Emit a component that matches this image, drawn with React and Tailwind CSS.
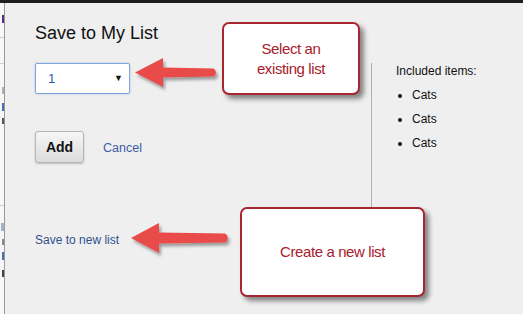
import React from 'react';

const Callout = ({ className, children }) => (
    <div
        className={`absolute bg-white border-2 border-[#a82630] rounded-[7px] shadow-[4px_4px_5px_rgba(0,0,0,0.45)] flex items-center justify-center text-center text-[15px] leading-[20px] tracking-[-0.4px] text-[#a8202c] ${className}`}
    >
        {children}
    </div>
);

// red pointer arrow, tip on the left
const Arrow = ({ className, w, h, head, shaft }) => (
    <svg className={`absolute ${className}`} width={w + 6} height={h + 6} style={{ overflow: 'visible' }}>
        <defs>
            <filter id="arrowShadow" x="-20%" y="-40%" width="140%" height="180%">
                <feDropShadow dx="2" dy="3" stdDeviation="1.5" floodColor="#000" floodOpacity="0.35" />
            </filter>
        </defs>
        <g filter="url(#arrowShadow)">
            <path
                d={`M0 ${h / 2} L${head} 0 L${head} ${h / 2 - shaft / 2 - 0.5} L${w - shaft / 2} ${h / 2 - shaft / 2 + 0.5} A${shaft / 2} ${shaft / 2} 0 0 1 ${w - shaft / 2} ${h / 2 + shaft / 2 - 0.5} L${head} ${h / 2 + shaft / 2 + 0.5} L${head} ${h} Z`}
                fill="#e84b48"
            />
        </g>
    </svg>
);

const App = () => {
    return (
        <div className="w-[523px] h-[314px] overflow-hidden flex flex-col bg-[#efefef] font-['Liberation_Sans',Arial,sans-serif]">
            {/* top edge of the window behind */}
            <div className="h-[3px] bg-[#1e1e1e] shrink-0" />

            <div className="flex flex-1 min-h-0">
                {/* sliver of the page behind the dialog (only glyph edges show) */}
                <div className="w-[4px] shrink-0 bg-[#f7f7f7] flex flex-col items-end">
                    <div className="mt-[12px] w-[2px] h-[8px] bg-[#5b2a86]" />
                    <div className="mt-[14px] w-full h-px bg-[#cfcfcf]" />
                    <div className="mt-[25px] w-full h-px bg-[#cfcfcf]" />
                    <div className="mt-[23px] w-[2px] h-[7px] bg-[#b0b0b0]" />
                    <div className="mt-[9px] w-[2px] h-[8px] bg-[#4a6cb0]" />
                    <div className="mt-[7px] w-[2px] h-[6px] bg-[#555]" />
                    <div className="mt-[81px] w-full h-px bg-[#cfcfcf]" />
                    <div className="mt-[17px] w-[3px] h-[8px] bg-[#9fb2c8]" />
                    <div className="mt-[8px] w-[2px] h-[6px] bg-[#888]" />
                    <div className="mt-[7px] w-[2px] h-[8px] bg-[#4a6cb0]" />
                    <div className="mt-[10px] w-[2px] h-[7px] bg-[#444]" />
                </div>
                <div className="w-px shrink-0 bg-[#9a9a9a]" />

                {/* dialog */}
                <div className="relative flex-1 flex">
                    <div className="w-[366px] shrink-0 pl-[30px] pt-[19px]">
                        <h2 className="text-[18px] leading-[22px] text-[#111]">Save to My List</h2>

                        <div className="mt-[19px] w-[95px] h-[31px] bg-white border border-[#7ea6dc] rounded-[2px] shadow-[0_0_2px_rgba(90,140,210,0.5)] flex items-center justify-between pl-[12px] pr-[6px]">
                            <span className="text-[13px] text-[#2a5ba8]">1</span>
                            <span className="text-[9px] text-[#111]">▼</span>
                        </div>

                        <div className="mt-[37px] flex items-center">
                            <button className="w-[49px] h-[32px] rounded-[3px] border border-[#b4b4b4] bg-gradient-to-b from-[#f6f6f6] to-[#dcdcdc] shadow-[0_1px_2px_rgba(0,0,0,0.2)] text-[14px] font-bold text-[#111]">
                                Add
                            </button>
                            <span className="ml-[19px] mt-[3px] text-[12.5px] text-[#3b5ea6]">Cancel</span>
                        </div>

                        <div className="mt-[68px] text-[12px] text-[#2f4f8f]">Save to new list</div>
                    </div>

                    <div className="mt-[60px] h-[145px] border-l border-[#b0b0b0] pl-[24px] pt-[1px] text-[12px] text-[#111]">
                        <div className="leading-[15px]">Included items:</div>
                        <ul className="mt-[9px] flex flex-col gap-[9px]">
                            {['Cats', 'Cats', 'Cats'].map((item, i) => (
                                <li key={i} className="flex items-center leading-[15px]">
                                    <span className="w-[4px] h-[4px] rounded-full bg-[#111] ml-[2px] mr-[10px]" />
                                    {item}
                                </li>
                            ))}
                        </ul>
                    </div>

                    {/* annotations */}
                    <Arrow className="left-[130px] top-[55px]" w={83} h={29} head={28} shaft={9} />
                    <Callout className="left-[217px] top-[19px] w-[138px] h-[73px]">
                        Select an<br />existing list
                    </Callout>

                    <Arrow className="left-[126px] top-[220px]" w={99} h={30} head={28} shaft={10} />
                    <Callout className="left-[235px] top-[204px] w-[185px] h-[90px]">
                        Create a new list
                    </Callout>
                </div>
            </div>
        </div>
    );
};

export default App;
